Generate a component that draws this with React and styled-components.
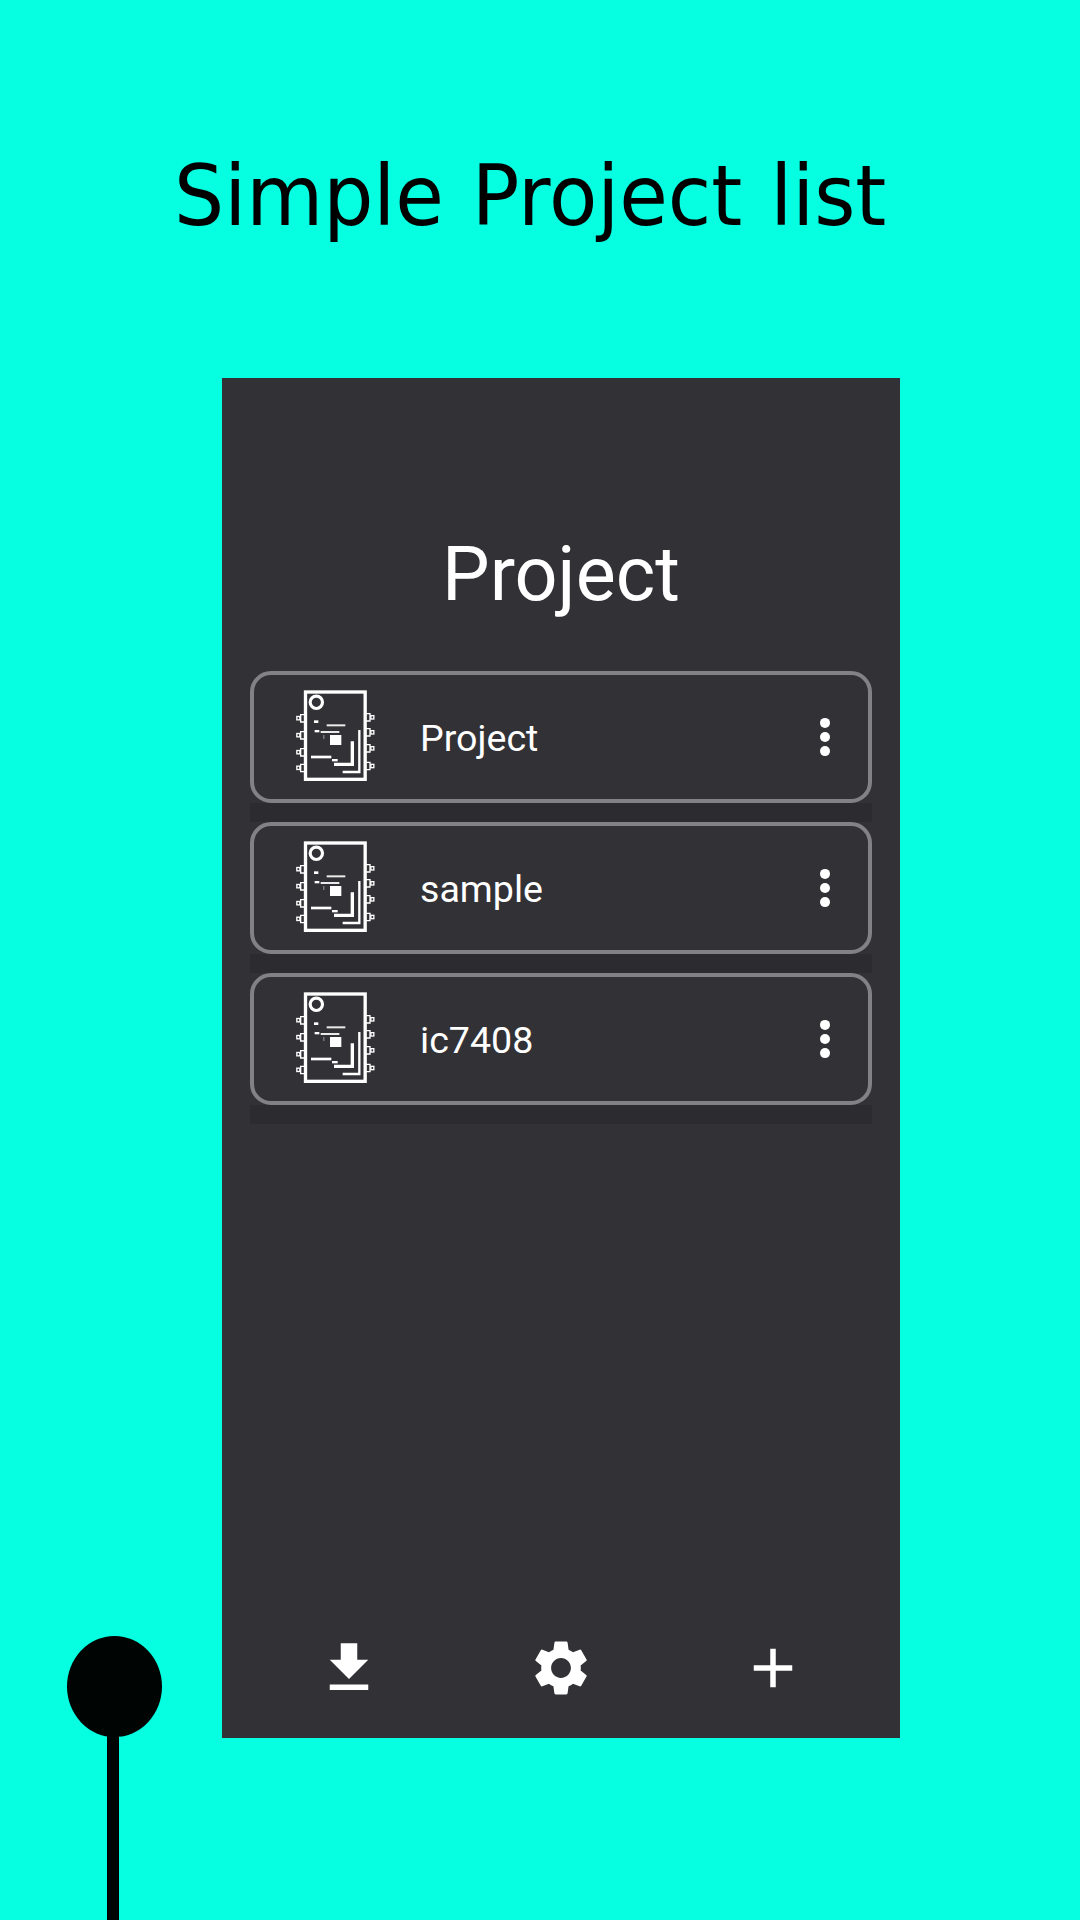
import React from "react";
import styled, { createGlobalStyle } from "styled-components";
import { MdAdd, MdSettings } from "react-icons/md";

const GlobalStyle = createGlobalStyle`
  *, *::before, *::after { box-sizing: border-box; }
  html, body { margin: 0; padding: 0; background: #05ffe0; }
`;

const Page = styled.div`
  width: 1080px;
  height: 1920px;
  display: flex;
  flex-direction: column;
  overflow: hidden;
  background: #05ffe0;
`;

const Banner = styled.header`
  height: 378px;
  padding: 146px 0 0 174px;
`;

const BannerTitle = styled.h1`
  margin: 0;
  font: 400 84px/100px "DejaVu Sans", Verdana, sans-serif;
  color: #000;
  white-space: nowrap;
  word-spacing: 3px;
  transform: scaleX(0.941);
  transform-origin: left center;
`;

const Stage = styled.main`
  flex: 1;
  display: grid;
  grid-template-columns: 222px 678px;
`;

const PinColumn = styled.aside`
  display: flex;
  flex-direction: column;
  justify-content: flex-end;
  padding-left: 67.4px;
`;

const PinHead = styled.div`
  width: 95px;
  height: 101px;
  border-radius: 50%;
  background: #000402;
`;

const PinStem = styled.div`
  width: 12px;
  height: 184px;
  margin: -1px 0 0 39.2px;
  background: #000402;
`;

const Phone = styled.section`
  height: 1360px;
  display: flex;
  flex-direction: column;
  padding: 146px 28px 37px;
  background: #323136;
  font-family: Roboto, sans-serif;
  color: #fff;
`;

const ScreenTitle = styled.h2`
  margin: 0 0 47px;
  font-size: 75.5px;
  font-weight: 400;
  line-height: 100px;
  text-align: center;
`;

const List = styled.ul`
  margin: 0;
  padding: 0;
  list-style: none;
`;

const ListItem = styled.li`
  height: 151px;
  display: flex;
  flex-direction: column;
`;

const Card = styled.div`
  height: 132px;
  display: flex;
  align-items: center;
  padding: 0 37.5px 0 41px;
  border: 4px solid #828186;
  border-radius: 21px;
`;

const CardShade = styled.div`
  flex: 1;
  background: #2c2b2f;
`;

const CardLabel = styled.span`
  flex: 1;
  padding: 1px 0 0 45px;
  font-size: 37.6px;
  line-height: 48px;
`;

const MoreButton = styled.button`
  display: flex;
  padding: 0;
  border: 0;
  background: none;
  color: inherit;
`;

const Toolbar = styled.nav`
  margin-top: auto;
  display: flex;
  justify-content: space-between;
  padding: 0 66px;
`;

const ToolButton = styled.button`
  display: flex;
  padding: 0;
  border: 0;
  background: none;
  color: #fff;
  font-size: 66px;
`;

const Chip = styled.svg`
  flex: none;
  margin-bottom: 4px;
`;

const leftPins = [145, 196, 247, 294];
const rightPins = [142, 187, 235, 288];

function ChipIcon() {
  return (
    <Chip width="80" height="94" viewBox="45 54 240 282" fill="none" stroke="#fff">
      <rect x="76.5" y="66" width="179" height="262" strokeWidth="10" />
      <circle cx="109" cy="97" r="18.5" strokeWidth="9.5" />
      {leftPins.map((y) => (
        <g key={y} strokeWidth="4">
          <path d={`M74 ${y - 11}H62V${y + 11}H74`} />
          <rect x="50.5" y={y - 5.5} width="9" height="10" />
        </g>
      ))}
      {rightPins.map((y) => (
        <g key={y} strokeWidth="4">
          <path d={`M258 ${y - 11}H270V${y + 11}H258`} />
          <rect x="272.5" y={y - 5} width="9" height="10" />
        </g>
      ))}
      <g fill="#fff" stroke="none">
        <rect x="102" y="151" width="13" height="8" />
        <rect x="104" y="180" width="14" height="7" />
        <rect x="140" y="163" width="56" height="6" opacity=".9" />
        <rect x="122" y="183" width="56" height="6" opacity=".9" />
        <rect x="130" y="195" width="3" height="12" opacity=".5" />
        <rect x="150" y="195" width="34" height="30" />
        <rect x="93" y="257" width="61" height="8" />
        <rect x="156" y="267" width="17" height="7" />
      </g>
      <path d="M217 214V283H162" strokeWidth="10" />
      <path d="M238 180V306H188" strokeWidth="7" />
    </Chip>
  );
}

function MoreIcon() {
  return (
    <svg width="12" height="40" viewBox="0 0 12 40" fill="#fff">
      <circle cx="6" cy="5.9" r="5" />
      <circle cx="6" cy="20" r="5" />
      <circle cx="6" cy="34.1" r="5" />
    </svg>
  );
}

function DownloadIcon() {
  return (
    <svg width="1em" height="1em" viewBox="0 0 24 24" fill="currentColor">
      <path d="M19 9h-4V3H9v6H5l7 7 7-7zM5 18v2h14v-2H5z" />
    </svg>
  );
}

const projects = ["Project", "sample", "ic7408"];

export default function App() {
  return (
    <>
      <GlobalStyle />
      <Page>
        <Banner>
          <BannerTitle>Simple Project list</BannerTitle>
        </Banner>
        <Stage>
          <PinColumn>
            <PinHead />
            <PinStem />
          </PinColumn>
          <Phone>
            <ScreenTitle>Project</ScreenTitle>
            <List>
              {projects.map((name) => (
                <ListItem key={name}>
                  <Card>
                    <ChipIcon />
                    <CardLabel>{name}</CardLabel>
                    <MoreButton aria-label="More">
                      <MoreIcon />
                    </MoreButton>
                  </Card>
                  <CardShade />
                </ListItem>
              ))}
            </List>
            <Toolbar>
              <ToolButton aria-label="Download"><DownloadIcon /></ToolButton>
              <ToolButton aria-label="Settings"><MdSettings /></ToolButton>
              <ToolButton aria-label="Add"><MdAdd /></ToolButton>
            </Toolbar>
          </Phone>
        </Stage>
      </Page>
    </>
  );
}
